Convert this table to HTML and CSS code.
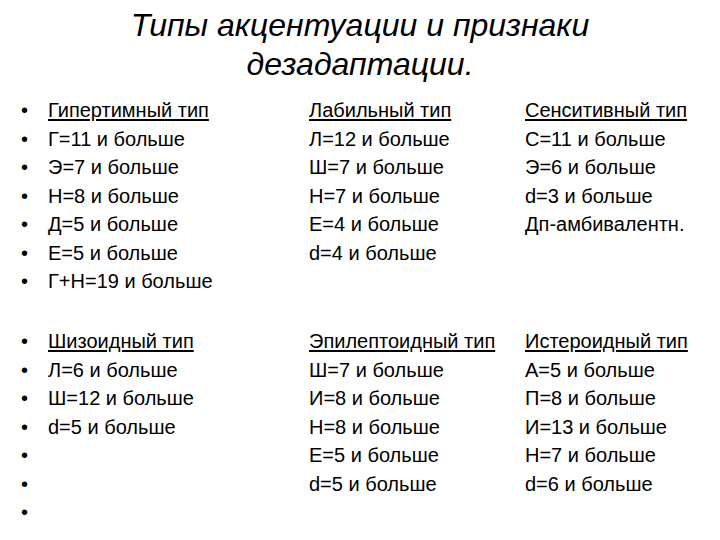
FILE: index.html
```html
<!DOCTYPE html>
<html lang="ru">
<head>
<meta charset="utf-8">
<title>Типы акцентуации и признаки дезадаптации.</title>
<link rel="stylesheet" href="styles.css">
</head>
<body>
<h1 class="title">Типы акцентуации и признаки<br>дезадаптации.</h1>
<section class="group">
  <span class="bullet">•</span><span class="cell head">Гипертимный тип</span><span class="cell head">Лабильный тип</span><span class="cell head">Сенситивный тип</span>
  <span class="bullet">•</span><span class="cell">Г=11 и больше</span><span class="cell">Л=12 и больше</span><span class="cell">С=11 и больше</span>
  <span class="bullet">•</span><span class="cell">Э=7 и больше</span><span class="cell">Ш=7 и больше</span><span class="cell">Э=6 и больше</span>
  <span class="bullet">•</span><span class="cell">Н=8 и больше</span><span class="cell">Н=7 и больше</span><span class="cell">d=3 и больше</span>
  <span class="bullet">•</span><span class="cell">Д=5 и больше</span><span class="cell">Е=4 и больше</span><span class="cell">Дп-амбивалентн.</span>
  <span class="bullet">•</span><span class="cell">Е=5 и больше</span><span class="cell">d=4 и больше</span><span class="cell"></span>
  <span class="bullet">•</span><span class="cell">Г+Н=19 и больше</span><span class="cell"></span><span class="cell"></span>
</section>
<section class="group group-second">
  <span class="bullet">•</span><span class="cell head">Шизоидный тип</span><span class="cell head">Эпилептоидный тип</span><span class="cell head">Истероидный тип</span>
  <span class="bullet">•</span><span class="cell">Л=6 и больше</span><span class="cell">Ш=7 и больше</span><span class="cell">А=5 и больше</span>
  <span class="bullet">•</span><span class="cell">Ш=12 и больше</span><span class="cell">И=8 и больше</span><span class="cell">П=8 и больше</span>
  <span class="bullet">•</span><span class="cell">d=5 и больше</span><span class="cell">Н=8 и больше</span><span class="cell">И=13 и больше</span>
  <span class="bullet">•</span><span class="cell"></span><span class="cell">Е=5 и больше</span><span class="cell">Н=7 и больше</span>
  <span class="bullet">•</span><span class="cell"></span><span class="cell">d=5 и больше</span><span class="cell">d=6 и больше</span>
  <span class="bullet">•</span><span class="cell"></span><span class="cell"></span><span class="cell"></span>
</section>
</body>
</html>
```
FILE: styles.css
```css
html, body {
  margin: 0;
  padding: 0;
  background: #ffffff;
  color: #000000;
}
body {
  width: 720px;
  height: 540px;
  overflow: hidden;
  font-family: "Liberation Sans", Arial, sans-serif;
}
.title {
  margin: 0;
  padding-top: 6px;
  font-family: "Liberation Sans", Arial, sans-serif;
  font-style: italic;
  font-weight: normal;
  font-size: 32px;
  line-height: 39px;
  text-align: center;
  height: 89px;
  box-sizing: border-box;
}
.group {
  display: grid;
  grid-template-columns: 48px 261px 216px 1fr;
  grid-auto-rows: 28.5px;
  font-size: 20px;
  line-height: 28.5px;
  margin-top: 7px;
}
.group-second {
  margin-top: 31.5px;
}
.bullet {
  padding-left: 21px;
}
.cell {
  white-space: nowrap;
}
.head {
  text-decoration: underline;
  text-decoration-thickness: 1.5px;
  text-underline-offset: 2px;
}
```
